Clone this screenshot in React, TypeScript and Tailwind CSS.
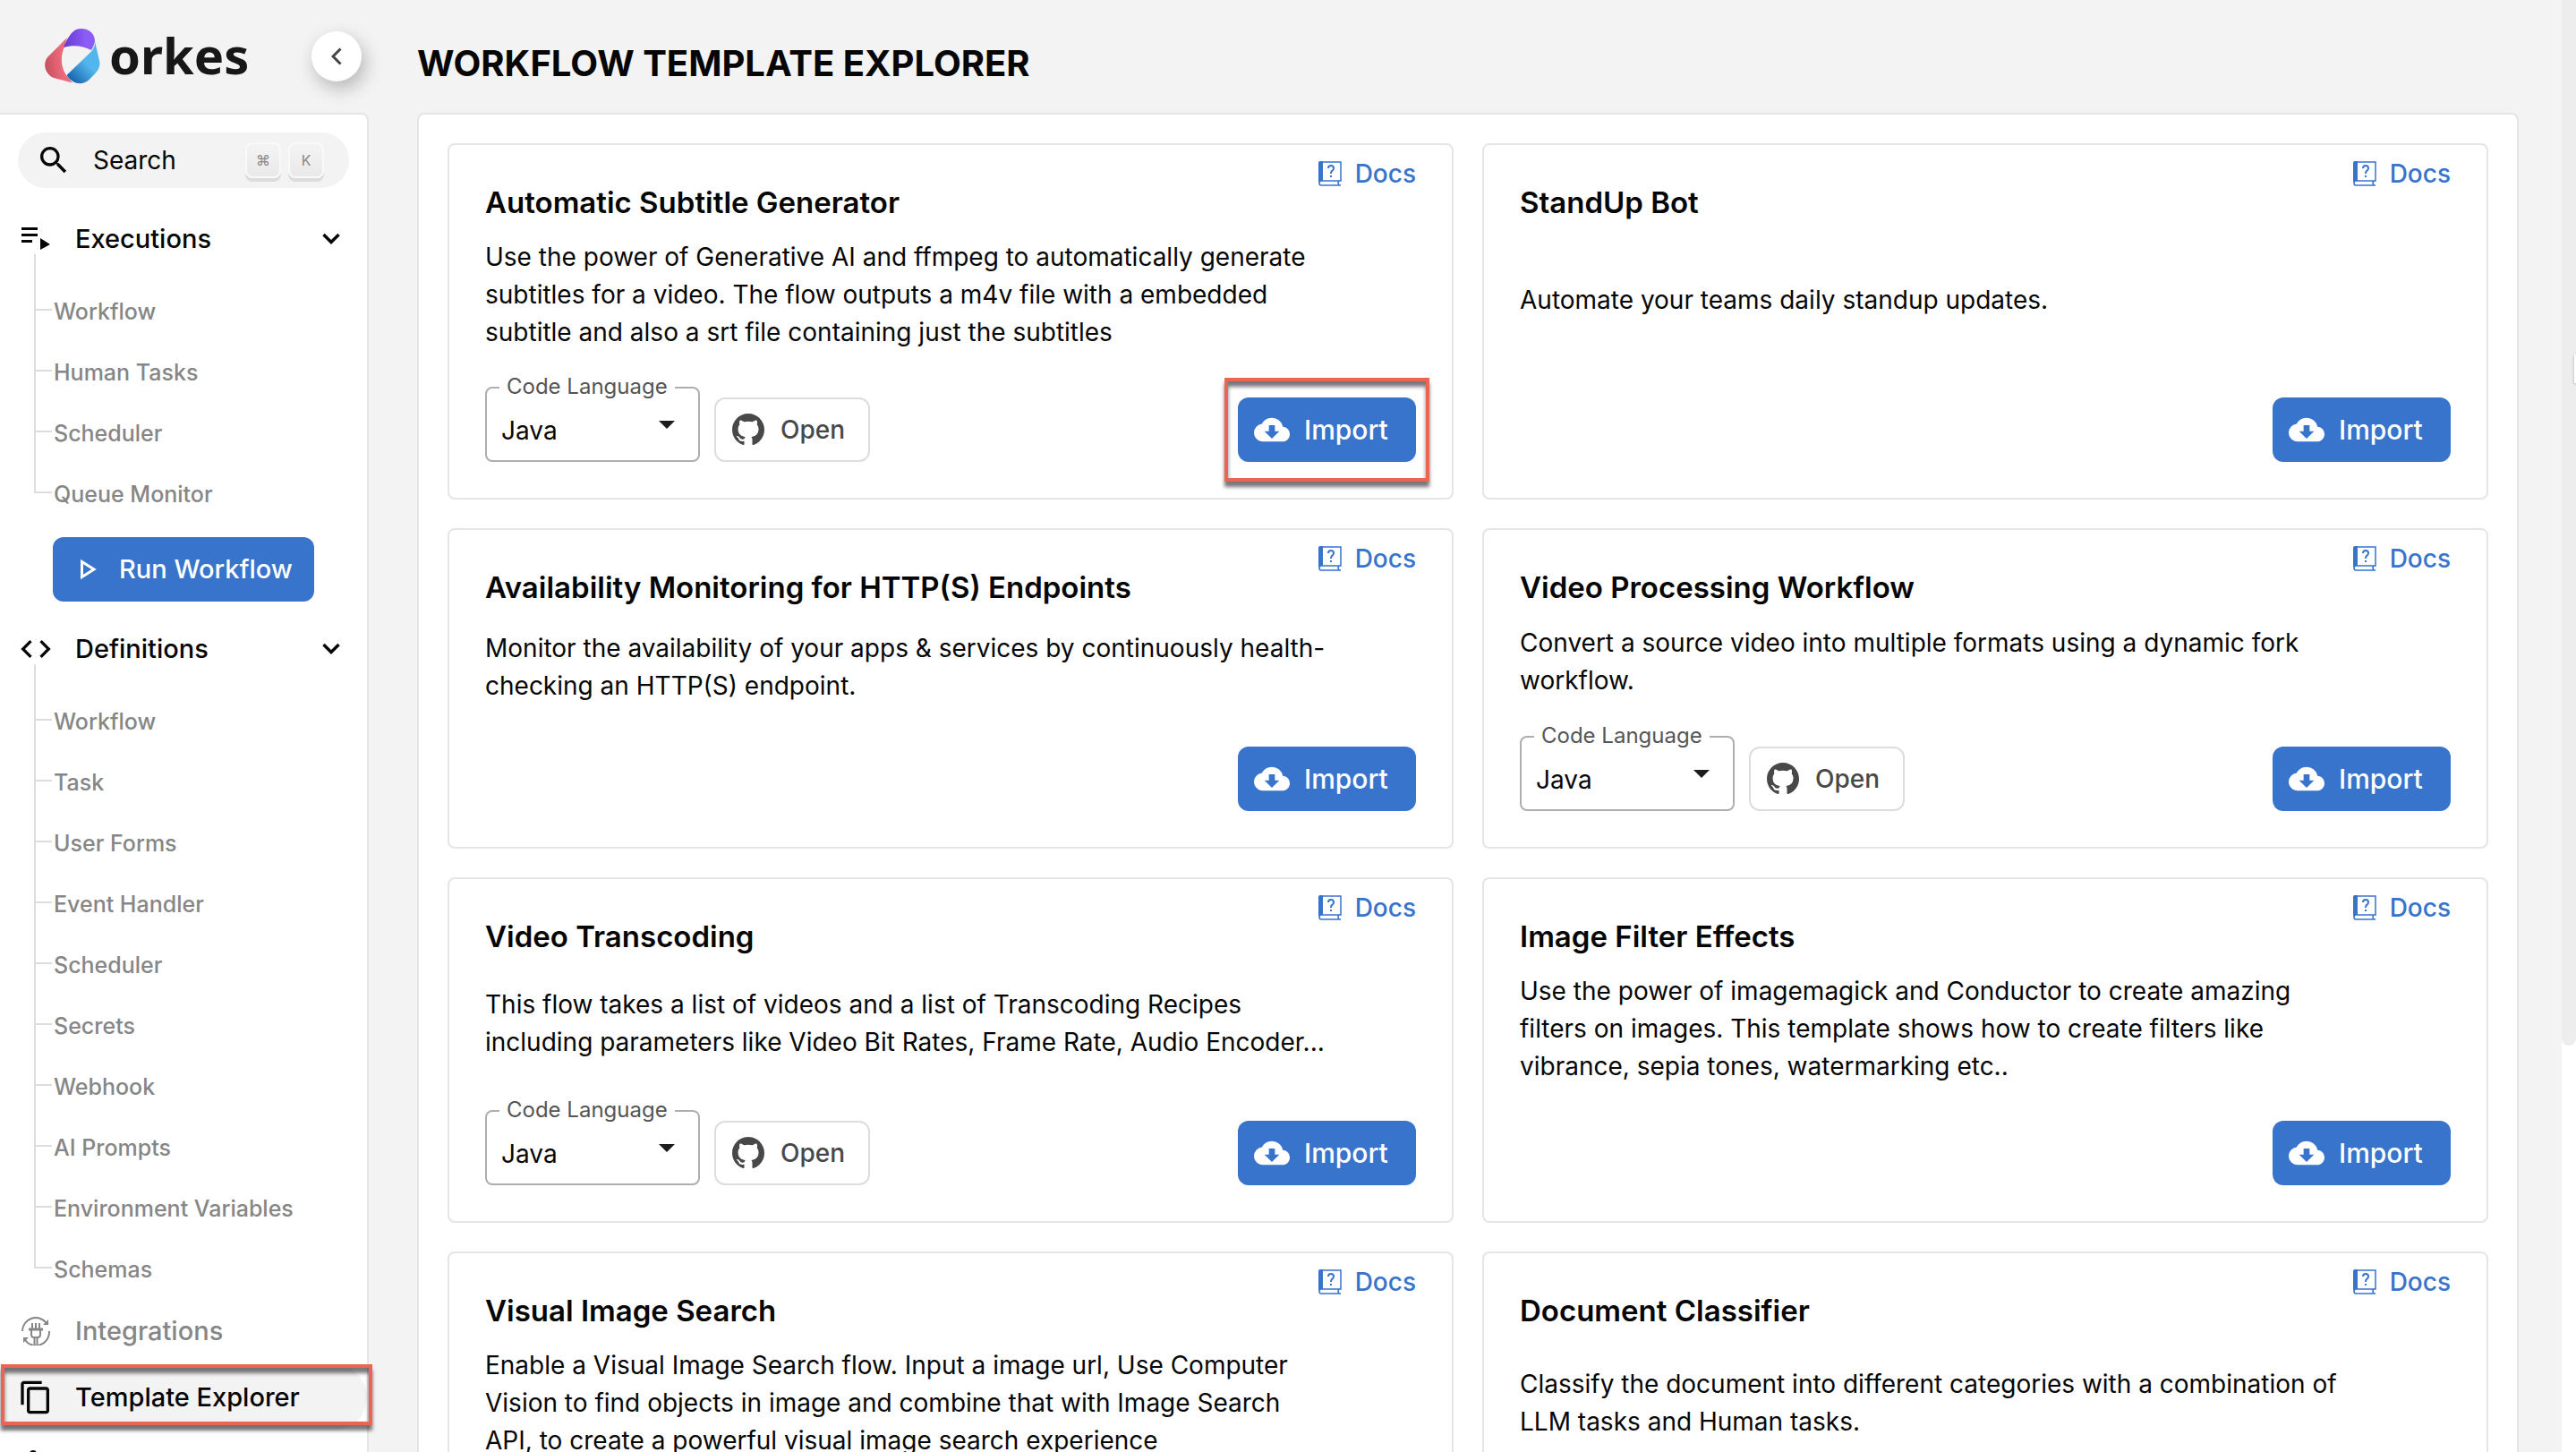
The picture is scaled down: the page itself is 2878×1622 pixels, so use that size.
import type { ReactNode } from "react";
import { MdCloudDownload, MdCode, MdContentCopy, MdSearch } from "react-icons/md";

type Template = {
  title: string;
  lines: string[];
  code?: boolean;
  marked?: boolean;
};

const templates: Template[] = [
  {
    title: "Automatic Subtitle Generator",
    lines: [
      "Use the power of Generative AI and ffmpeg to automatically generate",
      "subtitles for a video. The flow outputs a m4v file with a embedded",
      "subtitle and also a srt file containing just the subtitles",
    ],
    code: true,
    marked: true,
  },
  { title: "StandUp Bot", lines: ["Automate your teams daily standup updates."] },
  {
    title: "Availability Monitoring for HTTP(S) Endpoints",
    lines: [
      "Monitor the availability of your apps & services by continuously health-",
      "checking an HTTP(S) endpoint.",
    ],
  },
  {
    title: "Video Processing Workflow",
    lines: ["Convert a source video into multiple formats using a dynamic fork", "workflow."],
    code: true,
  },
  {
    title: "Video Transcoding",
    lines: [
      "This flow takes a list of videos and a list of Transcoding Recipes",
      "including parameters like Video Bit Rates, Frame Rate, Audio Encoder...",
    ],
    code: true,
  },
  {
    title: "Image Filter Effects",
    lines: [
      "Use the power of imagemagick and Conductor to create amazing",
      "filters on images. This template shows how to create filters like",
      "vibrance, sepia tones, watermarking etc..",
    ],
  },
  {
    title: "Visual Image Search",
    lines: [
      "Enable a Visual Image Search flow. Input a image url, Use Computer",
      "Vision to find objects in image and combine that with Image Search",
      "API, to create a powerful visual image search experience",
    ],
  },
  {
    title: "Document Classifier",
    lines: [
      "Classify the document into different categories with a combination of",
      "LLM tasks and Human tasks.",
    ],
  },
];

const executions = ["Workflow", "Human Tasks", "Scheduler", "Queue Monitor"];
const definitions = [
  "Workflow",
  "Task",
  "User Forms",
  "Event Handler",
  "Scheduler",
  "Secrets",
  "Webhook",
  "AI Prompts",
  "Environment Variables",
  "Schemas",
];

function Logo() {
  return (
    <span className="flex items-center gap-2.5">
      <svg viewBox="0 0 62 62" className="h-[62px] w-[62px]" aria-hidden="true">
        <defs>
          <linearGradient id="red" x1="0" x2="1" y1="0.7" y2="0.5">
            <stop offset="0" stopColor="#c5505f" />
            <stop offset="0.6" stopColor="#ea6a7a" />
          </linearGradient>
          <linearGradient id="violet" x1="0" x2="1">
            <stop offset="0" stopColor="#6439d2" />
            <stop offset="0.7" stopColor="#8b5cf6" />
          </linearGradient>
          <linearGradient id="blue" x1="0.2" x2="0.7" y1="1" y2="0.4">
            <stop offset="0" stopColor="#1663ad" />
            <stop offset="0.8" stopColor="#52b6ec" />
          </linearGradient>
        </defs>
        <path d="M25 10 4 31C-3 38 0 51 10 55l21 5.500-7-8.500c-7-11-6-22-2-32z" fill="url(#red)" />
        <path d="M21 21c3-8 8-17 14-20 9-3 20 1 21 12 0 4-2 7-4 11-10-5-20-6-31-3z" fill="url(#violet)" />
        <path d="M56 14 61.500 38c0 6-3 10-6 13l-7 7c-6 5-17 5-24-6l28-27c2-3 4-6 3.500-11z" fill="url(#blue)" />
      </svg>
      <span className="pb-1 font-['Noto_Sans',sans-serif] text-[56px] leading-[60px] font-bold text-[#171717]">orkes</span>
    </span>
  );
}

function ExecutionsIcon() {
  return (
    <svg viewBox="0 0 32 26" className="h-[26px] w-8" fill="currentColor" aria-hidden="true">
      <path d="M0 0h18v3H0zM0 7h18v3H0zM0 14h12v3H0zM21 12l11 7-11 6z" />
    </svg>
  );
}

function IntegrationsIcon() {
  return (
    <svg viewBox="0 0 32 32" className="size-8" fill="none" stroke="currentColor" strokeWidth="2" aria-hidden="true">
      <path d="M1 16A15 15 0 0 1 28 7M31 16A15 15 0 0 1 4 26" />
      <path d="M30 3v6h-6zM2 29v-6h6z" fill="currentColor" stroke="none" />
      <path d="M12 7v6M16 7v6M20 7v6M14.500 24v7M17.500 24v7M11 15v5q0 3 3 3h4q3 0 3-3v-5" />
      <path d="M8 14h16" strokeWidth="3" />
    </svg>
  );
}

function DocsIcon() {
  return (
    <svg viewBox="0 0 26 28" className="h-7 w-[26px]" fill="none" stroke="currentColor" strokeWidth="1.500" aria-hidden="true">
      <path d="M0 2Q0 0 2 0h3v22H2q-2 0-2 2z" fill="currentColor" stroke="none" />
      <path d="M1 24V3q0-2 2-2h22v21H3q-2 0-2 2.500T3 27h22M23 22q-2 2 0 5" />
      <path d="M11 8q0-3 3-3t3 3q0 2-2 3-1 1-1 3" strokeWidth="2" />
      <path d="M13 16h2v2h-2z" fill="currentColor" stroke="none" />
    </svg>
  );
}

function GithubIcon() {
  return (
    <svg viewBox="0 0 16 16" className="size-9" fill="currentColor" aria-hidden="true">
      <path d="M8 0C3.580 0 0 3.580 0 8c0 3.540 2.290 6.530 5.470 7.590.4.070.55-.17.55-.38 0-.19-.01-.82-.01-1.490-2.010.37-2.530-.49-2.690-.94-.09-.23-.48-.94-.82-1.130-.28-.15-.68-.52-.01-.53.63-.01 1.080.58 1.230.82.72 1.210 1.870.87 2.330.66.07-.52.28-.87.51-1.070-1.780-.2-3.640-.89-3.640-3.950 0-.87.31-1.590.82-2.150-.08-.2-.36-1.020.08-2.120 0 0 .67-.21 2.200.82.64-.18 1.320-.27 2-.27s1.360.09 2 .27c1.530-1.040 2.200-.82 2.200-.82.44 1.100.16 1.920.08 2.120.51.56.82 1.270.82 2.150 0 3.070-1.870 3.750-3.650 3.950.29.25.54.73.54 1.480 0 1.070-.01 1.930-.01 2.200 0 .21.15.46.55.38A8.010 8.010 0 0 0 16 8c0-4.420-3.580-8-8-8z" />
    </svg>
  );
}

function Chevron() {
  return (
    <svg viewBox="0 0 20 14" className="h-3.5 w-5" fill="none" stroke="currentColor" strokeWidth="3.500" aria-hidden="true">
      <path d="m1.500 2 8.500 8.500L18.500 2" />
    </svg>
  );
}

function Key({ children }: { children: ReactNode }) {
  return (
    <kbd className="flex h-10 w-10 items-center justify-center rounded-lg border-2 border-[#f9f9f9] bg-linear-to-b from-[#f4f4f4] to-[#e9e9e9] font-['Inter',sans-serif] text-base text-[#888] shadow-[0_4px_0_#dcdcdc]">
      {children}
    </kbd>
  );
}

function NavIcon({ children }: { children: ReactNode }) {
  return (
    <span className="mr-6 flex w-10 shrink-0 items-center justify-center">{children}</span>
  );
}

function NavSection({ icon, label, items }: { icon: ReactNode; label: string; items: string[] }) {
  return (
    <section>
      <button type="button" aria-expanded="true" className="flex h-[74px] w-full items-center pr-[30px] pl-5 text-left text-[29px] font-medium">
        <NavIcon>{icon}</NavIcon>
        <span className="flex-1">{label}</span>
        <Chevron />
      </button>
      <ul className="relative pt-2 pl-[38px]">
        <li aria-hidden="true" className="absolute -top-5 bottom-[33px] left-[38px] w-0.5 bg-[#ddd]" />
        {items.map((item) => (
          <li key={item} className="flex h-[68px] items-center gap-0.5 text-[25px] font-medium text-[#868686]">
            <span className="h-0.5 w-5 bg-[#ddd]" />
            <a href="#" className="pt-1">{item}</a>
          </li>
        ))}
      </ul>
    </section>
  );
}

function Card({ template, index }: { template: Template; index: number }) {
  const id = "language-" + index;
  return (
    <article className="relative flex min-h-[358px] flex-col rounded-lg border-2 border-[#e5e5e5] bg-white px-10 pt-11 pb-10">
      <a href="#" className="absolute top-3 right-10 flex h-10 items-center gap-[15px] font-medium text-[#3874cb]">
        <DocsIcon />
        Docs
      </a>
      <h2 className="mb-5 text-[33px] leading-10 font-semibold">{template.title}</h2>
      <div className="flex flex-1 items-center">
        <p className="leading-[42px]">
          {template.lines.map((line) => (
            <span key={line} className="block whitespace-nowrap">{line}</span>
          ))}
        </p>
      </div>
      <div className="flex items-end gap-4 pt-10">
        {template.code && (
          <>
            <div className="relative">
              <label htmlFor={id} className="absolute -top-4 left-4 bg-white px-2 text-2xl leading-8 text-[#555]">
                Code Language
              </label>
              <select id={id} className="h-[84px] w-[240px] appearance-none rounded-lg border-2 border-[#aeaeae] bg-transparent pt-3.5 pl-4">
                <option>Java</option>
              </select>
              <span aria-hidden="true" className="pointer-events-none absolute top-[38px] right-7 border-x-[9px] border-t-[9px] border-x-transparent border-t-[#1c1c1c]" />
            </div>
            <button type="button" className="flex h-[72px] w-[174px] items-center gap-[18px] rounded-xl border-2 border-[#ddd] pl-[18px] font-medium text-[#484848]">
              <GithubIcon />
              Open
            </button>
          </>
        )}
        <div className="relative ml-auto">
          <button type="button" className="flex h-[72px] w-[199px] items-center gap-4 rounded-xl bg-[#3874cb] pl-[18px] text-[30px] font-medium text-white">
            <MdCloudDownload className="size-10" />
            Import
          </button>
          {template.marked && (
            <span className="pointer-events-none absolute -inset-x-[15px] -top-[22px] -bottom-[22px] border-4 border-[#ec6554] shadow-[0_6px_4px_#00000088,inset_0_6px_4px_#00000088]" />
          )}
        </div>
      </div>
    </article>
  );
}

export default function App() {
  return (
    <div className="relative flex h-screen overflow-hidden bg-[#f3f3f3] font-['Inter',sans-serif] text-[28px] leading-[42px] text-[#060606]">
      <aside className="flex w-[412px] shrink-0 flex-col">
        <header className="flex h-[126px] shrink-0 items-center justify-between pr-2 pl-[50px]">
          <Logo />
          <button type="button" aria-label="Collapse menu" className="flex size-14 items-center justify-center rounded-full bg-white shadow-[4px_8px_20px_#00000040]">
            <svg viewBox="0 0 12 20" className="h-5 w-3" fill="none" stroke="#444" strokeWidth="3" aria-hidden="true">
              <path d="m10.500 1.500-8.500 8.500 8.500 8.500" />
            </svg>
          </button>
        </header>
        <nav className="flex-1 rounded-tr-lg border-t-2 border-r-2 border-[#e5e5e5] bg-white pt-5">
          <button type="button" className="mb-5 ml-5 flex h-[62px] w-[370px] items-center rounded-full bg-[#f3f3f3] pr-7 pl-5 text-left">
            <MdSearch className="size-10" />
            <span className="flex-1 pl-6">Search</span>
            <span className="flex gap-2">
              <Key>⌘</Key>
              <Key>K</Key>
            </span>
          </button>
          <NavSection icon={<ExecutionsIcon />} label="Executions" items={executions} />
          <button type="button" className="mt-4 mb-4 ml-[59px] flex h-[72px] w-[292px] items-center gap-6 rounded-xl bg-[#3874cb] pl-[30px] text-[29px] font-medium text-white">
            <svg viewBox="0 0 20 24" className="h-6 w-5" fill="none" stroke="currentColor" strokeWidth="3" aria-hidden="true">
              <path d="M2.500 3.500v17L16 12z" />
            </svg>
            Run Workflow
          </button>
          <NavSection icon={<MdCode className="size-10" />} label="Definitions" items={definitions} />
          <a href="#" className="flex h-[74px] items-center pl-5 text-[29px] font-medium text-[#868686]">
            <NavIcon><IntegrationsIcon /></NavIcon>
            Integrations
          </a>
          <a href="#" aria-current="page" className="relative flex h-[74px] items-center rounded-r-full bg-[#f3f3f3] pl-5 text-[29px] font-medium">
            <NavIcon><MdContentCopy className="size-10" /></NavIcon>
            Template Explorer
            <span className="pointer-events-none absolute top-0 -right-1.5 bottom-1.5 left-px border-4 border-[#ec6554] shadow-[0_6px_4px_#00000088,inset_0_6px_4px_#00000088]" />
          </a>
          <a href="#" aria-label="More" className="flex h-[74px] pt-[22px] pl-[33px]">
            <span className="size-2 rounded-full bg-current" />
          </a>
        </nav>
      </aside>
      <main className="flex min-w-0 flex-1 flex-col pr-12 pl-[54px]">
        <header className="flex h-[126px] shrink-0 items-center pt-4">
          <h1 className="text-[40px] font-bold">WORKFLOW TEMPLATE EXPLORER</h1>
        </header>
        <div className="grid grid-cols-2 gap-8 rounded-t-lg border-2 border-[#e5e5e5] bg-white p-8">
          {templates.map((template, index) => (
            <Card key={template.title} template={template} index={index} />
          ))}
        </div>
      </main>
      <div aria-hidden="true" className="w-4 shrink-0 bg-white">
        <div className="h-[72%] rounded-b-full bg-[#ededed]" />
      </div>
      <div aria-hidden="true" className="absolute top-[396px] right-0 h-8 w-0.5 bg-white shadow-[0_1px_3px_#00000055]" />
    </div>
  );
}
